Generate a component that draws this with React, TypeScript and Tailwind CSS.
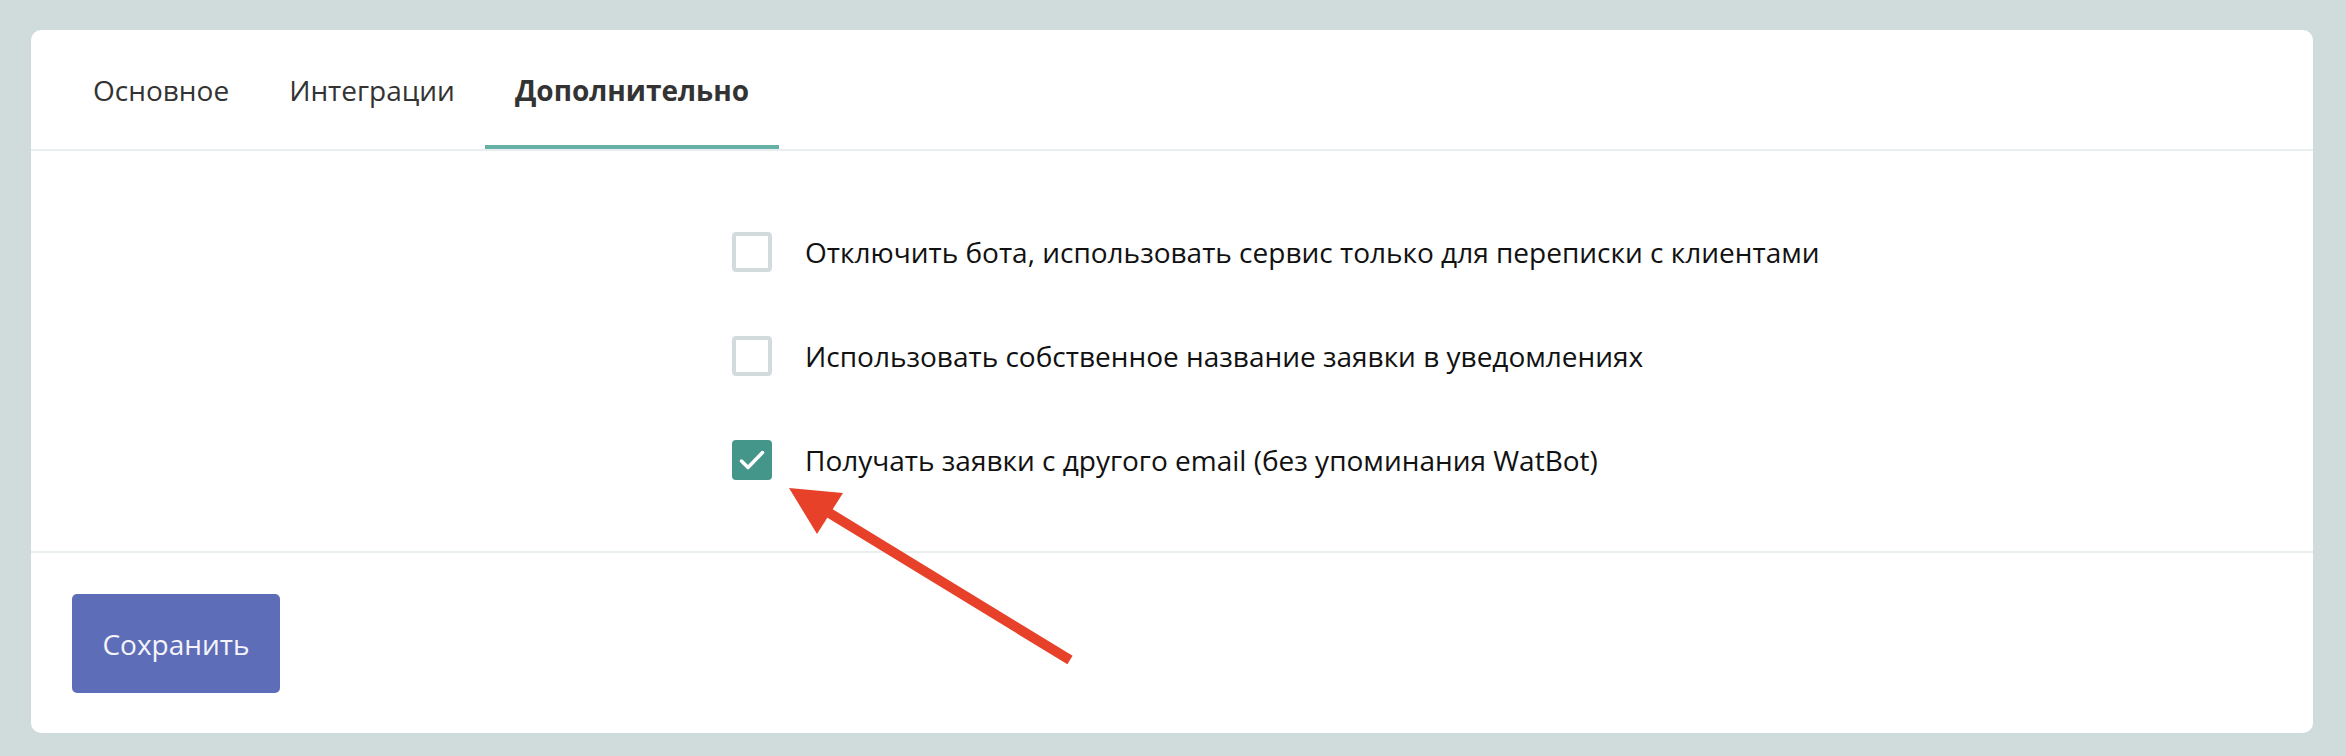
import React, { useState } from 'react';

const tabs = ['Основное', 'Интеграции', 'Дополнительно'];

const options = [
  { id: 'disableBot', label: 'Отключить бота, использовать сервис только для переписки с клиентами', checked: false },
  { id: 'ownTitle', label: 'Использовать собственное название заявки в уведомлениях', checked: false },
  { id: 'otherEmail', label: 'Получать заявки с другого email (без упоминания WatBot)', checked: true },
];

const Checkbox = ({ checked, onClick }: { checked: boolean; onClick: () => void }) => (
  <button
    type="button"
    onClick={onClick}
    className={
      checked
        ? 'w-[40px] h-[40px] rounded-[4px] bg-[#44968a] flex items-center justify-center shrink-0'
        : 'w-[40px] h-[40px] rounded-[4px] border-[4px] border-[#d3dcdd] bg-white shrink-0'
    }
  >
    {checked && (
      <svg width="40" height="40" viewBox="0 0 40 40" fill="none">
        <path d="M9.5 21l6.5 6.5L30.5 12.5" stroke="#fff" strokeWidth="3.5" strokeLinecap="round" strokeLinejoin="round" />
      </svg>
    )}
  </button>
);

const App = () => {
  const [active, setActive] = useState(2);
  const [values, setValues] = useState(options.map((o) => o.checked));

  const toggle = (i: number) => {
    setValues(values.map((v, idx) => (idx === i ? !v : v)));
  };

  return (
    <div
      className="relative min-h-screen bg-[#d0dcdc] pt-[30px] pl-[31px] pr-[33px]"
      style={{ fontFamily: '"Open Sans", "Noto Sans", sans-serif' }}
    >
      <div className="bg-white rounded-[10px]">
        {/* tabs */}
        <div className="flex px-[32px] h-[121px] border-b-2 border-[#e9eef0]">
          {tabs.map((t, i) => (
            <button
              key={t}
              type="button"
              onClick={() => setActive(i)}
              className={
                i === active
                  ? 'h-full px-[30px] pt-[5px] border-b-4 border-[#66b0a6] text-[28px] leading-none font-bold text-[#333]'
                  : 'h-full px-[30px] pt-[5px] border-b-4 border-transparent text-[28px] leading-none text-[#333]'
              }
            >
              {t}
            </button>
          ))}
        </div>

        {/* options */}
        <div className="pl-[701px] pt-[49px] pb-[39px] border-b-2 border-[#e9eef0]">
          {options.map((o, i) => (
            <div key={o.id} className="h-[104px] flex items-center gap-[33px]">
              <Checkbox checked={values[i]} onClick={() => toggle(i)} />
              <span className="text-[28px] leading-none text-[#111]">{o.label}</span>
            </div>
          ))}
        </div>

        {/* footer */}
        <div className="pl-[41px] pt-[41px] pb-[40px]">
          <button
            type="button"
            className="w-[208px] h-[99px] rounded-[5px] bg-[#5e6db8] text-[28px] leading-none text-[#f4f4fa]"
          >
            Сохранить
          </button>
        </div>
      </div>

      {/* annotation arrow */}
      <svg className="absolute left-0 top-0 pointer-events-none" width="2346" height="756">
        <line x1="1070" y1="660" x2="826" y2="511" stroke="#e8412a" strokeWidth="10" />
        <polygon points="789,488 843,493 817,534" fill="#e8412a" />
      </svg>
    </div>
  );
};

export default App;
